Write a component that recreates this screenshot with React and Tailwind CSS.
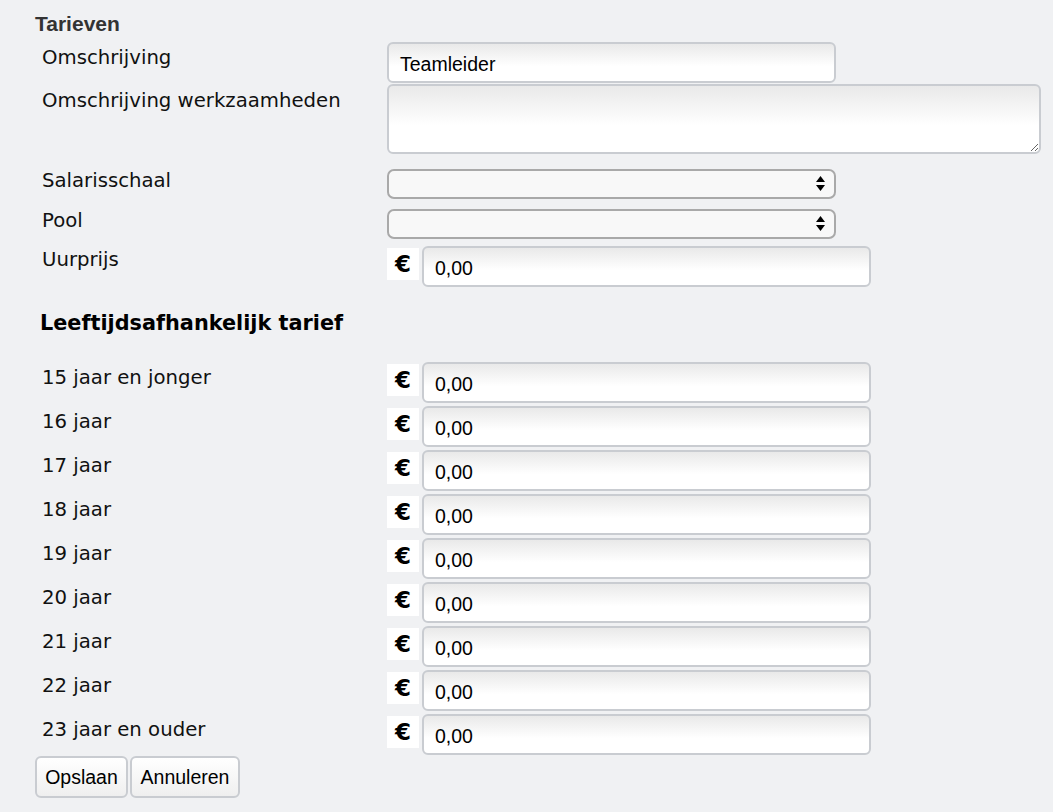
import React from "react";

const labelFont = { fontFamily: '"DejaVu Sans", Verdana, sans-serif' };
const inputFont = { fontFamily: '"Liberation Sans", Arial, sans-serif' };

function Label({ children, pt = "pt-[4px]" }) {
  return (
    <div
      className={`w-[352px] shrink-0 pl-[7px] text-[19.7px] leading-[23px] text-[#111] ${pt}`}
      style={labelFont}
    >
      {children}
    </div>
  );
}

function TextInput({ value, className = "" }) {
  return (
    <div
      className={`flex h-[41px] items-center rounded-[6px] border-2 border-[#c9ccd1] bg-linear-to-b from-[#e9e9e9] to-white to-60% pl-[11px] pt-[4px] text-[19.5px] text-black ${className}`}
      style={inputFont}
    >
      {value}
    </div>
  );
}

function Select() {
  return (
    <div className="flex h-[30px] w-[449px] items-center justify-end rounded-[7px] border-2 border-[#a9a9a9] bg-[#f8f8f8] pr-[9px]">
      <svg width="9" height="16" viewBox="0 0 9 16">
        <path d="M4.5 0 L9 6 L0 6 Z" fill="#000" />
        <path d="M0 9 L9 9 L4.5 15 Z" fill="#000" />
      </svg>
    </div>
  );
}

function EuroInput() {
  return (
    <div className="flex items-start">
      <div
        className="mt-[2px] flex h-[32px] w-[32px] items-center justify-center bg-white pt-[1px] text-[23px] font-bold leading-none text-black"
        style={labelFont}
      >
        €
      </div>
      <TextInput value="0,00" className="ml-[3px] w-[449px]" />
    </div>
  );
}

export default function App() {
  const ages = [
    "15 jaar en jonger",
    "16 jaar",
    "17 jaar",
    "18 jaar",
    "19 jaar",
    "20 jaar",
    "21 jaar",
    "22 jaar",
    "23 jaar en ouder",
  ];
  return (
    <div className="min-h-screen w-full bg-[#f0f1f3] pl-[35px] pt-[12px]">
      <div
        className="text-[21px] font-bold leading-[23px] text-[#333]"
        style={inputFont}
      >
        Tarieven
      </div>

      <div className="mt-[7px] flex items-start">
        <Label>Omschrijving</Label>
        <TextInput value="Teamleider" className="w-[449px]" />
      </div>

      <div className="mt-[1px] flex items-start">
        <Label pt="pt-[5px]">Omschrijving werkzaamheden</Label>
        <textarea
          className="h-[70px] w-[654px] resize rounded-[6px] border-2 border-[#c9ccd1] bg-linear-to-b from-[#e9e9e9] to-white to-60% outline-none"
          defaultValue=""
        />
      </div>

      <div className="mt-[15px] flex items-start">
        <Label pt="pt-0">Salarisschaal</Label>
        <Select />
      </div>

      <div className="mt-[10px] flex items-start">
        <Label pt="pt-0">Pool</Label>
        <Select />
      </div>

      <div className="mt-[7px] flex items-start">
        <Label pt="pt-[2px]">Uurprijs</Label>
        <EuroInput />
      </div>

      <div
        className="mt-[24px] pl-[5px] text-[20.8px] font-bold leading-[24px] text-black"
        style={labelFont}
      >
        Leeftijdsafhankelijk tarief
      </div>

      <div className="mt-[27px] flex flex-col gap-[3px]">
        {ages.map((a) => (
          <div key={a} className="flex items-start">
            <Label>{a}</Label>
            <EuroInput />
          </div>
        ))}
      </div>

      <div className="mt-[1px] flex gap-[2px] pb-4">
        <button
          className="flex h-[42px] w-[93px] items-center justify-center rounded-[6px] border-2 border-[#c9ccd1] bg-linear-to-b from-white to-[#efefef] pt-[2px] text-[19.5px] text-black"
          style={inputFont}
        >
          Opslaan
        </button>
        <button
          className="flex h-[42px] w-[110px] items-center justify-center rounded-[6px] border-2 border-[#c9ccd1] bg-linear-to-b from-white to-[#efefef] pt-[2px] text-[19.5px] text-black"
          style={inputFont}
        >
          Annuleren
        </button>
      </div>
    </div>
  );
}
